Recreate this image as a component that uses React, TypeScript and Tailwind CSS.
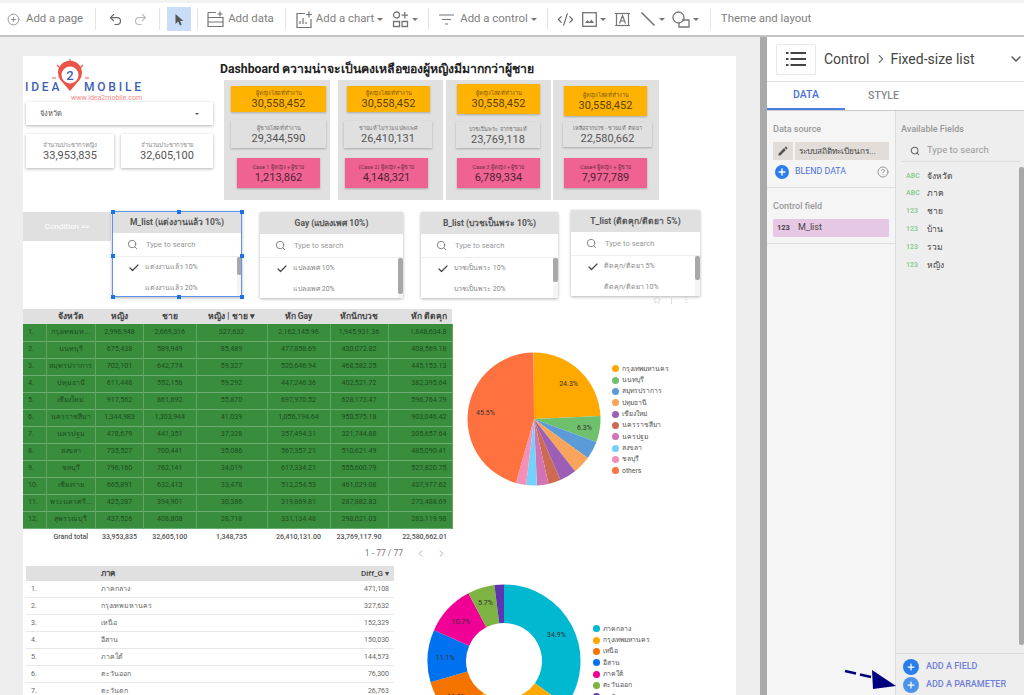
import { Check, ChevronDown, ChevronLeft, ChevronRight, CircleHelp, CirclePlus, Code2, Plus, Redo2, Search, Star, Undo2 } from "lucide-react";

const rows = [
  ["1.", "กรุงเทพมห...", "2,996,948", "2,669,316", "327,632", "2,162,145.96", "1,945,931.36", "1,848,634.8"],
  ["2.", "นนทบุรี", "675,438", "589,949", "85,489", "477,858.69", "430,072.82", "408,569.18"],
  ["3.", "สมุทรปราการ", "702,101", "642,774", "59,327", "520,646.94", "468,582.25", "445,153.13"],
  ["4.", "ปทุมธานี", "611,448", "552,156", "59,292", "447,246.36", "402,521.72", "382,395.64"],
  ["5.", "เชียงใหม่", "917,562", "861,692", "55,870", "697,970.52", "628,173.47", "596,764.79"],
  ["6.", "นครราชสีมา", "1,344,983", "1,303,944", "41,039", "1,056,194.64", "950,575.18", "903,046.42"],
  ["7.", "นครปฐม", "478,679", "441,351", "37,328", "357,494.31", "321,744.88", "305,657.64"],
  ["8.", "สงขลา", "735,527", "700,441", "35,086", "567,357.21", "510,621.49", "485,090.41"],
  ["9.", "ชลบุรี", "796,160", "762,141", "34,019", "617,334.21", "555,600.79", "527,820.75"],
  ["10.", "เชียงราย", "665,891", "632,413", "33,478", "512,254.53", "461,029.08", "437,977.62"],
  ["11.", "พระนครศรี...", "425,287", "394,901", "30,386", "319,869.81", "287,882.83", "273,488.69"],
  ["12.", "สุพรรณบุรี", "437,526", "408,808", "28,718", "331,134.48", "298,021.03", "283,119.98"],
];

const regions = [
  ["1.", "ภาคกลาง", "471,108"],
  ["2.", "กรุงเทพมหานคร", "327,632"],
  ["3.", "เหนือ", "152,329"],
  ["4.", "อีสาน", "150,030"],
  ["5.", "ภาคใต้", "144,573"],
  ["6.", "ตะวันออก", "76,300"],
  ["7.", "ตะวันตก", "26,763"],
];

const panels = [
  {
    cls: "ml-[4px] w-[106px]",
    cards: [
      { cls: "mt-[6px] ml-[7px] w-[95px] h-[26px] bg-[#ffb300] text-[#5a4208]", label: "ผู้หญิงโสดที่ทำงาน", value: "30,558,452" },
      { cls: "mt-[8px] ml-[7px] w-[95px] h-[28px] bg-[#e0e0e0] text-[#555]", label: "ผู้ชายโสดที่ทำงาน", value: "29,344,590" },
      { cls: "mt-[10px] ml-[13px] w-[83px] h-[30px] bg-[#f06292] text-[#4c2234]", label: "Case 1 ผู้หญิง + ผู้ชาย", value: "1,213,862" },
    ],
  },
  {
    cls: "ml-[8px] w-[105px]",
    cards: [
      { cls: "mt-[6px] ml-[9px] w-[83px] h-[26px] bg-[#ffb300] text-[#5a4208]", label: "ผู้หญิงโสดที่ทำงาน", value: "30,558,452" },
      { cls: "mt-[9px] ml-[6px] w-[88px] h-[27px] bg-[#e0e0e0] text-[#555]", label: "ชายแท้ ไม่รวมแปลงเพศ", value: "26,410,131" },
      { cls: "mt-[10px] ml-[7px] w-[83px] h-[30px] bg-[#f06292] text-[#4c2234]", label: "(Case 2) ผู้หญิง + ผู้ชาย", value: "4,148,321" },
    ],
  },
  {
    cls: "ml-[3px] w-[105px]",
    cards: [
      { cls: "mt-[4px] ml-[11px] w-[83px] h-[30px] bg-[#ffb300] text-[#5a4208]", label: "ผู้หญิงโสดที่ทำงาน", value: "30,558,452" },
      { cls: "mt-[8px] ml-[10px] w-[84px] h-[26px] bg-[#e0e0e0] text-[#555]", label: "บวชเป็นพระ จากชายแท้", value: "23,769,118" },
      { cls: "mt-[10px] ml-[11px] w-[83px] h-[30px] bg-[#f06292] text-[#4c2234]", label: "Case 3 ผู้หญิง + ผู้ชาย", value: "6,789,334" },
    ],
  },
  {
    cls: "ml-[2px] w-[106px]",
    cards: [
      { cls: "mt-[6px] ml-[11px] w-[83px] h-[30px] bg-[#ffb300] text-[#5a4208]", label: "ผู้หญิงโสดที่ทำงาน", value: "30,558,452" },
      { cls: "mt-[6px] ml-[10px] w-[89px] h-[25px] bg-[#e0e0e0] text-[#555]", label: "เหลือจากบวช - ชายแท้ ติดยา", value: "22,580,662" },
      { cls: "mt-[11px] ml-[11px] w-[83px] h-[30px] bg-[#f06292] text-[#4c2234]", label: "Case4 ผู้หญิง + ผู้ชาย", value: "7,977,789" },
    ],
  },
];

const pieSlices = [
  { pct: 24.3, color: "#ffa800", name: "กรุงเทพมหานคร", label: "24.3%", lr: 50 },
  { pct: 6.3, color: "#6fc06c", name: "นนทบุรี", label: "6.3%", lr: 51 },
  { pct: 4.4, color: "#5a9bd8", name: "สมุทรปราการ" },
  { pct: 4.4, color: "#f8a45a", name: "ปทุมธานี" },
  { pct: 4.1, color: "#9c5fb5", name: "เชียงใหม่" },
  { pct: 3.0, color: "#cc6b52", name: "นครราชสีมา" },
  { pct: 2.8, color: "#d273b5", name: "นครปฐม" },
  { pct: 2.6, color: "#74d2fa", name: "สงขลา" },
  { pct: 2.5, color: "#f48fb8", name: "ชลบุรี" },
  { pct: 45.5, color: "#ff7240", name: "others", label: "45.5%", lr: 49 },
];

const donutSlices = [
  { pct: 34.9, color: "#00b8d0", name: "ภาคกลาง", label: "34.9%", lr: 59 },
  { pct: 24.3, color: "#ffa800", name: "กรุงเทพมหานคร", label: "24.3%", lr: 59 },
  { pct: 11.3, color: "#f57400", name: "เหนือ", label: "11.3%", lr: 59 },
  { pct: 11.1, color: "#0072f0", name: "อีสาน", label: "11.1%", lr: 59 },
  { pct: 10.7, color: "#f10096", name: "ภาคใต้", label: "10.7%", lr: 59 },
  { pct: 5.7, color: "#7cb342", name: "ตะวันออก", label: "5.7%", lr: 62 },
  { pct: 2.0, color: "#5e35b1", name: "ตะวันตก" },
];

const fields = [
  ["ABC", "จังหวัด"],
  ["ABC", "ภาค"],
  ["123", "ชาย"],
  ["123", "บ้าน"],
  ["123", "รวม"],
  ["123", "หญิง"],
];

type Slice = { pct: number; color: string; name: string; label?: string; lr?: number };

function point(r: number, c: number, turn: number) {
  const a = turn * 2 * Math.PI;
  return [c + r * Math.sin(a), c - r * Math.cos(a)];
}

function Ring({ slices, r, inner = 0, size }: { slices: Slice[]; r: number; inner?: number; size: number }) {
  const c = size / 2;
  let at = 0;
  return (
    <svg width={size} height={size} viewBox={`0 0 ${size} ${size}`} className="shrink-0">
      {slices.map((s) => {
        const from = at;
        at += s.pct / 100;
        const [x1, y1] = point(r, c, from);
        const [x2, y2] = point(r, c, at);
        const big = s.pct > 50 ? 1 : 0;
        const [lx, ly] = point(s.lr ?? 0, c, from + s.pct / 200);
        let d = `M${c} ${c}L${x1} ${y1}A${r} ${r} 0 ${big} 1 ${x2} ${y2}Z`;
        if (inner) {
          const [x3, y3] = point(inner, c, at);
          const [x4, y4] = point(inner, c, from);
          d = `M${x1} ${y1}A${r} ${r} 0 ${big} 1 ${x2} ${y2}L${x3} ${y3}A${inner} ${inner} 0 ${big} 0 ${x4} ${y4}Z`;
        }
        return (
          <g key={s.name}>
            <path d={d} fill={s.color} />
            {s.label && (
              <text x={lx} y={ly + 3} textAnchor="middle" fontSize="7" fill="#333">
                {s.label}
              </text>
            )}
          </g>
        );
      })}
    </svg>
  );
}

function Legend({ slices, cls }: { slices: Slice[]; cls: string }) {
  return (
    <div className={cls}>
      {slices.map((s) => (
        <div key={s.name} className="flex h-[11.35px] items-center gap-[3px] text-[6.8px] text-[#555]">
          <span className="h-[7px] w-[7px] rounded-full" style={{ backgroundColor: s.color }} />
          {s.name}
        </div>
      ))}
    </div>
  );
}

function Caret() {
  return <span className="ml-[3px] inline-block border-x-[3.5px] border-t-[3.5px] border-x-transparent border-t-[#757575]" />;
}

function Sep({ cls }: { cls: string }) {
  return <span className={`h-[22px] w-px bg-[#e4e4e4] ${cls}`} />;
}

function Toolbar() {
  return (
    <div className="flex h-[37px] shrink-0 items-center border-t-[3px] border-b-2 border-t-[#f2f2f2] border-b-[#c4c4c4] bg-white text-[11.4px] text-[#808080]">
      <CirclePlus className="ml-[7px] h-[13px] w-[13px]" strokeWidth={1.5} />
      <span className="ml-[6px]">Add a page</span>
      <Sep cls="ml-[12px]" />
      <Undo2 className="ml-[12px] h-[15px] w-[15px] text-[#666]" strokeWidth={1.8} />
      <Redo2 className="ml-[10px] h-[15px] w-[15px] text-[#bbb]" strokeWidth={1.8} />
      <Sep cls="ml-[11px]" />
      <span className="ml-[7px] flex h-[24px] w-[24px] items-center justify-center bg-[#c9dcf8]">
        <svg width="11" height="13" viewBox="0 0 11 13">
          <path d="M1.5 1v10l2.6-2.4L6 12.4l1.8-.8-1.9-3.7H9.4z" fill="#555" />
        </svg>
      </span>
      <Sep cls="ml-[6px]" />
      <svg width="17" height="17" viewBox="0 0 17 17" fill="none" stroke="#757575" strokeWidth="1.2" className="ml-[9px]">
        <path d="M1 1.5h8M1 1.5v14h15V6.5H1M1 11h15M13 .5v5M10.5 3h5" />
      </svg>
      <span className="ml-[4px]">Add data</span>
      <Sep cls="ml-[11px]" />
      <svg width="16" height="17" viewBox="0 0 16 17" fill="none" stroke="#757575" strokeWidth="1.2" className="ml-[10px]">
        <path d="M9 2.5H1v14h14V8M4 13v-3M7 13V7M10 13v-2M13 .5v6M10 3.5h6" />
      </svg>
      <span className="ml-[4px]">Add a chart</span>
      <Caret />
      <svg width="17" height="17" viewBox="0 0 17 17" fill="none" stroke="#757575" strokeWidth="1.3" className="ml-[9px]">
        <circle cx="4.5" cy="4" r="3" />
        <path d="M1.5 10.5h6v5h-6zM10 10.5h5.5v5H10zM12.8 1v6.5M9.5 4.2h6.5" />
      </svg>
      <Caret />
      <Sep cls="ml-[10px]" />
      <svg width="15" height="11" viewBox="0 0 15 11" fill="none" stroke="#757575" strokeWidth="1.2" className="ml-[10px]">
        <path d="M0 1h15M3 5.5h9M6 10h3" />
      </svg>
      <span className="ml-[6px]">Add a control</span>
      <Caret />
      <Sep cls="ml-[10px]" />
      <Code2 className="ml-[9px] h-[17px] w-[17px] text-[#666]" strokeWidth={1.6} />
      <svg width="15" height="15" viewBox="0 0 15 15" fill="none" stroke="#757575" strokeWidth="1.3" className="ml-[8px]">
        <rect x=".7" y=".7" width="13.6" height="13.6" />
        <path d="M3 11l2.5-3 2 2 2-2.5L12 11z" fill="#757575" stroke="none" />
      </svg>
      <Caret />
      <svg width="15" height="15" viewBox="0 0 15 15" fill="none" stroke="#757575" strokeWidth="1.2" className="ml-[9px]">
        <rect x="1.5" y="1.5" width="12" height="12" />
        <path d="M0 1.5h3M12 1.5h3M0 13.5h3M12 13.5h3M4.5 11.5l3-8 3 8M5.5 9h4" />
      </svg>
      <svg width="16" height="16" viewBox="0 0 16 16" fill="none" stroke="#757575" strokeWidth="1.6" className="ml-[10px]">
        <path d="M1.5 1.5l13 13" />
      </svg>
      <Caret />
      <svg width="18" height="17" viewBox="0 0 18 17" fill="none" stroke="#757575" strokeWidth="1.3" className="ml-[7px]">
        <circle cx="6.5" cy="6.5" r="5.5" />
        <path d="M10 9h7v7H7v-4" />
      </svg>
      <Caret />
      <Sep cls="ml-[11px]" />
      <span className="ml-[10px]">Theme and layout</span>
    </div>
  );
}

function Logo() {
  return (
    <svg width="122" height="45" viewBox="0 0 122 45" className="block">
      <g stroke="#f0554a" strokeWidth="1.2">
        <path d="M47 2v4M34 8l3 3M60 8l-3 3M29 21h4M62 21h4" />
      </g>
      <path d="M47 34L37.5 23a12 12 0 1 1 19 0z" fill="#ea5348" />
      <circle cx="47" cy="18" r="8.5" fill="#fff" />
      <text x="47" y="22.5" textAnchor="middle" fontSize="13" fontWeight="500" fill="#3f5fb5">2</text>
      <text x="2" y="34" fontSize="12" fontWeight="500" letterSpacing="2.8" fill="#3f5fb5" fontFamily="Roboto">IDEA</text>
      <text x="61" y="34" fontSize="12" fontWeight="500" letterSpacing="2.8" fill="#3f5fb5" fontFamily="Roboto">MOBILE</text>
      <text x="48" y="43" fontSize="7" fill="#f08a8a" fontFamily="Roboto">www.idea2mobile.com</text>
    </svg>
  );
}

function StatCard({ cls, label, value }: { cls: string; label: string; value: string }) {
  return (
    <div className={`flex h-[34px] flex-col items-center justify-center bg-white shadow-[0_1px_3px_rgba(0,0,0,0.3)] ${cls}`}>
      <span className="text-[6px] leading-[9px] text-[#888]">{label}</span>
      <span className="text-[11px] leading-[13px] text-[#555]">{value}</span>
    </div>
  );
}

function FilterCard({
  cls,
  title,
  first,
  second,
  thumb,
  selected,
  children,
}: {
  cls: string;
  title: string;
  first: string;
  second: string;
  thumb: string;
  selected?: boolean;
  children?: React.ReactNode;
}) {
  return (
    <div className={`relative h-[86px] shrink-0 bg-white shadow-[0_1px_3px_rgba(0,0,0,0.3)] ${cls}`}>
      <div className="flex h-[22px] items-center justify-center bg-[#e0e0e0] text-[8.5px] font-bold text-[#555]">{title}</div>
      <div className="flex h-[24px] items-center border-b border-[#eee] pl-[15px] text-[7.6px] text-[#999]">
        <Search className="h-[11px] w-[11px] text-[#777]" strokeWidth={2} />
        <span className="ml-[8px]">Type to search</span>
      </div>
      <div className="flex">
        <div className="flex-1 pl-[16px] text-[7px] text-[#888]">
          <div className="flex h-[21px] items-center">
            <Check className="h-[12px] w-[12px] text-[#444]" strokeWidth={2.4} />
            <span className="ml-[5px]">{first}</span>
          </div>
          <div className="flex h-[21px] items-center pl-[17px]">{second}</div>
        </div>
        <div className="h-[40px] w-[5px] bg-[#f5f5f5]">
          <div className={`w-[5px] rounded-[2px] bg-[#a8a8a8] ${thumb}`} />
        </div>
      </div>
      {selected && (
        <div className="absolute inset-0 border-[1.5px] border-[#5b95ee]">
          <span className="absolute -left-[2.5px] -top-[2.5px] h-[4px] w-[4px] bg-[#1a73e8]" />
          <span className="absolute left-1/2 -top-[2.5px] h-[4px] w-[4px] bg-[#1a73e8]" />
          <span className="absolute -right-[2.5px] -top-[2.5px] h-[4px] w-[4px] bg-[#1a73e8]" />
          <span className="absolute -left-[2.5px] top-1/2 h-[4px] w-[4px] bg-[#1a73e8]" />
          <span className="absolute -right-[2.5px] top-1/2 h-[4px] w-[4px] bg-[#1a73e8]" />
          <span className="absolute -bottom-[2.5px] -left-[2.5px] h-[4px] w-[4px] bg-[#1a73e8]" />
          <span className="absolute -bottom-[2.5px] left-1/2 h-[4px] w-[4px] bg-[#1a73e8]" />
          <span className="absolute -bottom-[2.5px] -right-[2.5px] h-[4px] w-[4px] bg-[#1a73e8]" />
        </div>
      )}
      {children}
    </div>
  );
}

function ProvinceTable() {
  const widths = [23, 49.5, 48, 52.5, 71, 63, 58, 64];
  const heads = ["", "จังหวัด", "หญิง", "ชาย", "หญิง | ชาย ▾", "หัก Gay", "หักนักบวช", "หัก ติดคุก"];
  const total = ["", "Grand total", "33,953,835", "32,605,100", "1,348,735", "26,410,131.00", "23,769,117.90", "22,580,662.01"];
  return (
    <table className="w-[429px] table-fixed border-collapse text-center">
      <colgroup>
        {widths.map((w, i) => (
          <col key={i} style={{ width: w }} />
        ))}
      </colgroup>
      <thead>
        <tr className="h-[15px] bg-[#e0e0e0] text-[8.5px] font-bold text-[#444]">
          {heads.map((h, i) => (
            <th key={i} className={i === 7 ? "pr-[5px] text-right" : ""}>
              {h}
            </th>
          ))}
        </tr>
      </thead>
      <tbody>
        {rows.map((r) => (
          <tr key={r[0]} className="h-[17px] border-b border-[#6fae72] bg-[#388e3c] text-[7.1px] text-[#1e4d20]">
            {r.map((c, i) => (
              <td
                key={i}
                className={`border-r border-[#5fa463] p-0 ${i === 0 ? "pl-[5px] text-left" : ""} ${i === 7 ? "pr-[5px] text-right" : ""}`}
              >
                {c}
              </td>
            ))}
          </tr>
        ))}
        <tr className="h-[17px] text-[7px] font-medium text-[#555]">
          {total.map((c, i) => (
            <td key={i} className={i === 7 ? "pr-[5px] text-right" : ""}>
              {c}
            </td>
          ))}
        </tr>
      </tbody>
    </table>
  );
}

function RegionTable() {
  return (
    <div className="ml-[3px] w-[368px]">
      <div className="flex h-[15px] items-center bg-[#e0e0e0] text-[8px] font-bold text-[#444]">
        <span className="ml-[75px] flex-1">ภาค</span>
        <span className="mr-[5px] font-medium">Diff_G ▾</span>
      </div>
      {regions.map((r) => (
        <div key={r[0]} className="flex h-[17px] shrink-0 items-center border-b border-[#e8e8e8] text-[7px] text-[#666]">
          <span className="ml-[5px] w-[70px]">{r[0]}</span>
          <span className="flex-1">{r[1]}</span>
          <span className="mr-[5px]">{r[2]}</span>
        </div>
      ))}
    </div>
  );
}

function Report() {
  return (
    <div className="h-[640px] w-[713px] overflow-hidden bg-white">
      {/* header block */}
      <div className="flex h-[154px]">
        <div className="w-[197px] shrink-0">
          <div className="h-[46px] pt-[1px]">
            <Logo />
          </div>
          <div className="ml-[3px] flex h-[23px] w-[187px] items-center justify-between bg-white pl-[14px] pr-[14px] text-[7.5px] text-[#555] shadow-[0_1px_3px_rgba(0,0,0,0.3)]">
            จังหวัด
            <span className="border-x-[2px] border-t-[2px] border-x-transparent border-t-[#555]" />
          </div>
          <div className="ml-[3px] mt-[9px] flex gap-[7px]">
            <StatCard cls="w-[88px]" label="จำนวนประชากรหญิง" value="33,953,835" />
            <StatCard cls="w-[92px]" label="จำนวนประชากรชาย" value="32,605,100" />
          </div>
        </div>
        <div>
          <div className="h-[24px] pt-[5px] text-[12.25px] font-bold leading-[16px] text-[#222]">
            Dashboard ความน่าจะเป็นคงเหลือของผู้หญิงมีมากกว่าผู้ชาย
          </div>
          <div className="flex">
            {panels.map((p, i) => (
              <div key={i} className={`flex h-[120px] flex-col bg-[#e0e0e0] ${p.cls}`}>
                {p.cards.map((c) => (
                  <div
                    key={c.label}
                    className={`flex shrink-0 flex-col items-center justify-center shadow-[0_1px_2px_rgba(0,0,0,0.25)] ${c.cls}`}
                  >
                    <span className="whitespace-nowrap text-[5.5px] leading-[8px] opacity-80">{c.label}</span>
                    <span className="text-[11px] leading-[13px]">{c.value}</span>
                  </div>
                ))}
              </div>
            ))}
          </div>
        </div>
      </div>

      {/* filter controls */}
      <div className="flex h-[99px] items-start">
        <div className="mt-[2px] flex h-[29px] w-[88px] shrink-0 items-center justify-center bg-[#e0e0e0] text-[8px] text-white">
          Condition &gt;&gt;
        </div>
        <FilterCard
          cls="ml-[1px] mt-[1px] w-[130px]"
          title="M_list (แต่งงานแล้ว 10%)"
          first="แต่งงานแล้ว 10%"
          second="แต่งงานแล้ว 20%"
          thumb="h-[18px]"
          selected
        />
        <FilterCard
          cls="ml-[18px] mt-[2px] w-[143px]"
          title="Gay (แปลงเพศ 10%)"
          first="แปลงเพศ 10%"
          second="แปลงเพศ 20%"
          thumb="h-[36px]"
        />
        <FilterCard
          cls="ml-[18px] mt-[2px] w-[137px]"
          title="B_list (บวชเป็นพระ 10%)"
          first="บวชเป็นพระ 10%"
          second="บวชเป็นพระ 20%"
          thumb="h-[24px]"
        />
        <FilterCard
          cls="ml-[13px] w-[129px]"
          title="T_list (ติดคุก/ติดยา 5%)"
          first="ติดคุก/ติดยา 5%"
          second="ติดคุก/ติดยา 10%"
          thumb="h-[24px]"
        >
          <div className="absolute bottom-0 right-[10px] flex translate-y-full items-center gap-[10px] text-[#ccc]">
            <Star className="h-[8px] w-[8px]" />
            <span className="h-[8px] w-px bg-[#ddd]" />
            <span className="text-[8px] leading-[8px]">⋮</span>
          </div>
        </FilterCard>
      </div>

      {/* province table and pie */}
      <div className="flex h-[257px]">
        <div className="w-[429px] shrink-0">
          <ProvinceTable />
          <div className="flex h-[16px] items-center justify-end text-[8.5px] text-[#777]">
            1 - 77 / 77
            <ChevronLeft className="ml-[12px] h-[11px] w-[11px] text-[#aaa]" />
            <ChevronRight className="ml-[10px] mr-[5px] h-[11px] w-[11px] text-[#aaa]" />
          </div>
        </div>
        <div className="ml-[14px] mt-[42px]">
          <Ring slices={pieSlices} r={66.5} size={136} />
        </div>
        <Legend slices={pieSlices} cls="ml-[10px] mt-[54px]" />
      </div>

      {/* region table and donut */}
      <div className="flex">
        <RegionTable />
        <div className="ml-[32.5px] mt-[18px]">
          <Ring slices={donutSlices} r={76.5} inner={38} size={154} />
        </div>
        <Legend slices={donutSlices} cls="ml-[12.5px] mt-[57px]" />
      </div>
    </div>
  );
}

function SidePanel() {
  return (
    <div className="flex w-[257px] shrink-0 flex-col bg-white">
      <div className="flex h-[45px] shrink-0 items-center border-b border-[#ddd] text-[14px] text-[#444]">
        <span className="ml-[9px] flex h-[31px] w-[40px] items-center justify-center rounded-[2px] border border-[#e8e8e8]">
          <svg width="20" height="14" viewBox="0 0 20 14" fill="#444">
            <path d="M0 0h2.5v2H0zM4.5 0H20v2H4.5zM0 6h2.5v2H0zM4.5 6H20v2H4.5zM0 12h2.5v2H0zM4.5 12H20v2H4.5z" />
          </svg>
        </span>
        <span className="ml-[8px]">Control</span>
        <ChevronRight className="ml-[5px] h-[14px] w-[14px] text-[#777]" />
        <span className="ml-[2px] whitespace-nowrap">Fixed-size list</span>
        <ChevronDown className="ml-[33px] h-[16px] w-[16px] text-[#555]" />
      </div>
      <div className="flex h-[29px] shrink-0 border-b border-[#ccc] text-[10.5px] font-medium">
        <span className="flex w-[78px] items-center justify-center border-b-2 border-[#4a7fe0] text-[#4a6fdc]">DATA</span>
        <span className="flex w-[77px] items-center justify-center text-[#888]">STYLE</span>
      </div>
      <div className="flex min-h-0 flex-1">
        <div className="w-[129px] shrink-0 border-r border-[#ddd] bg-[#f5f5f5]">
          <div className="h-[77px] border-b border-[#ddd] px-[6px]">
            <div className="pt-[11px] text-[9px] font-medium leading-[14px] text-[#999]">Data source</div>
            <div className="mt-[6px] flex h-[18px] gap-[2px]">
              <span className="flex w-[20px] items-center justify-center bg-[#e2ddd8]">
                <svg width="12" height="12" viewBox="0 0 24 24" fill="#555">
                  <path d="M3 17.25V21h3.75L17.81 9.94l-3.75-3.75L3 17.25zM20.71 7.04c.39-.39.39-1.02 0-1.41l-2.34-2.34c-.39-.39-1.02-.39-1.41 0l-1.83 1.83 3.75 3.75 1.83-1.83z" />
                </svg>
              </span>
              <span className="flex flex-1 items-center whitespace-nowrap bg-[#e2ddd8] pl-[4px] text-[8.3px] text-[#444]">ระบบสถิติทะเบียนกร...</span>
            </div>
            <div className="mt-[5px] flex items-center">
              <span className="ml-[2px] flex h-[14px] w-[14px] items-center justify-center rounded-full bg-[#2b7de9]">
                <Plus className="h-[10px] w-[10px] text-white" strokeWidth={3.5} />
              </span>
              <span className="ml-[6px] flex-1 text-[8.8px] text-[#4a6fdc]">BLEND DATA</span>
              <CircleHelp className="h-[12px] w-[12px] text-[#999]" />
            </div>
          </div>
          <div className="h-[56px] border-b border-[#ddd] px-[6px]">
            <div className="pt-[11px] text-[9px] font-medium leading-[14px] text-[#999]">Control field</div>
            <div className="mt-[6px] flex h-[18px] items-center rounded-[1px] bg-[#e6c8e4] text-[9px] text-[#444]">
              <span className="ml-[4px] w-[21px] text-[7.5px] font-bold">123</span>
              M_list
            </div>
          </div>
        </div>
        <div className="flex min-w-0 flex-1 flex-col bg-[#eeeeee]">
          <div className="flex min-h-0 flex-1">
            <div className="min-w-0 flex-1">
              <div className="pl-[5px] pt-[11px] text-[9px] font-medium leading-[14px] text-[#999]">Available Fields</div>
              <div className="ml-[5px] mt-[4px] flex h-[22px] w-[119px] items-center border-b border-[#ddd] pl-[9px] text-[9.5px] text-[#999]">
                <Search className="h-[10px] w-[10px] text-[#666]" strokeWidth={2.5} />
                <span className="ml-[7px] whitespace-nowrap">Type to search</span>
              </div>
              <div className="mt-[5px]">
                {fields.map(([t, n]) => (
                  <div key={n} className="flex h-[17.8px] items-center pl-[10px] text-[8.5px] text-[#444]">
                    <span className="w-[21px] text-[7px] font-bold text-[#8fcf9a]">{t}</span>
                    {n}
                  </div>
                ))}
              </div>
            </div>
            <div className="mt-[56px] h-[478px] w-[5px] shrink-0 rounded-[2px] bg-[#a8a8a8]" />
          </div>
          <div className="h-[42px] shrink-0 border-t border-[#d8d8d8] pl-[7px] pt-[4px] text-[9px] font-medium text-[#6f80dc]">
            <div className="flex h-[18px] items-center">
              <span className="flex h-[16px] w-[16px] items-center justify-center rounded-full bg-[#2b7de9]">
                <Plus className="h-[10px] w-[10px] text-white" strokeWidth={3} />
              </span>
              <span className="ml-[7px]">ADD A FIELD</span>
            </div>
            <div className="flex h-[18px] items-center">
              <span className="flex h-[16px] w-[16px] items-center justify-center rounded-full bg-[#4c93ec]">
                <Plus className="h-[10px] w-[10px] text-white" strokeWidth={3} />
              </span>
              <span className="ml-[7px]">ADD A PARAMETER</span>
            </div>
          </div>
        </div>
      </div>
    </div>
  );
}

export default function App() {
  return (
    <div className="relative flex h-[695px] w-[1024px] flex-col overflow-hidden bg-white font-['Roboto','Noto_Sans',sans-serif]">
      <Toolbar />
      <div className="flex min-h-0 flex-1">
        <div className="w-[760px] shrink-0 overflow-hidden bg-[#eeeeee] pl-[23px] pt-[19px]">
          <Report />
        </div>
        <div className="w-[7px] shrink-0 bg-[#a9a9a9]" />
        <SidePanel />
      </div>
      {/* annotation arrow drawn over the screenshot */}
      <svg width="56" height="24" viewBox="0 0 56 24" className="absolute left-[843px] top-[668px]">
        <path d="M2 3l11 2.5M17 6.5l11 2.5" stroke="#00007f" strokeWidth="2.5" fill="none" />
        <path d="M29 2l1 19 23-3z" fill="#00007f" />
      </svg>
    </div>
  );
}
